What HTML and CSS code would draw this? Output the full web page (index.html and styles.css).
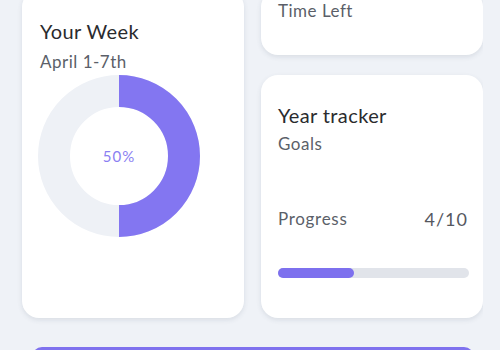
FILE: index.html
```html
<!DOCTYPE html>
<html>
<head>
<meta charset="utf-8">
<link rel="stylesheet" href="styles.css">
</head>
<body>
<div class="page">
  <div class="grid">
    <div class="card week">
      <div class="title">Your Week</div>
      <div class="sub">April 1-7th</div>
      <div class="donut">
        <svg width="162" height="162" viewBox="0 0 162 162">
          <circle cx="81" cy="81" r="65" fill="none" stroke="#eef1f6" stroke-width="32"/>
          <path d="M81 16 A65 65 0 0 1 81 146" fill="none" stroke="#8376f1" stroke-width="32"/>
        </svg>
        <span class="pct">50%</span>
      </div>
    </div>
    <div class="card time">
      <div class="sub">Time Left</div>
    </div>
    <div class="card year">
      <div class="title">Year tracker</div>
      <div class="sub">Goals</div>
      <div class="progress-row">
        <span>Progress</span>
        <span class="count">4/10</span>
      </div>
      <div class="track"><div class="fill" style="width:40%"></div></div>
    </div>
  </div>
  <div class="bottom-bar"></div>
</div>
</body>
</html>
```
FILE: styles.css
```css
html, body {
  margin: 0;
  padding: 0;
  background: #eff2f7;
  font-family: Lato, "Noto Sans", sans-serif;
  overflow: hidden;
}
.page {
  padding-left: 22px;
  width: 461px;
  height: 350px;
  overflow: hidden;
}
.grid {
  margin-top: -10px;
  display: grid;
  grid-template-columns: 222px 222px;
  grid-template-rows: 65px 243px;
  column-gap: 17px;
  row-gap: 20px;
}
.card {
  background: #fff;
  border-radius: 17px;
  box-shadow: 0 2px 5px rgba(60, 70, 100, 0.12);
  box-sizing: border-box;
}
.week {
  grid-row: 1 / 3;
  padding: 29px 18px 0 18px;
}
.title {
  font-size: 20px;
  letter-spacing: 0.4px;
  color: #2a2b2e;
  line-height: 24px;
}
.sub {
  font-size: 17px;
  letter-spacing: 0.5px;
  color: #5b5f69;
  line-height: 20px;
}
.week .sub {
  margin-top: 9px;
}
.donut {
  position: relative;
  width: 162px;
  height: 162px;
  margin-top: 3px;
  margin-left: -2px;
}
.donut svg {
  display: block;
}
.pct {
  position: absolute;
  inset: 0;
  display: flex;
  align-items: center;
  justify-content: center;
  font-size: 15px;
  letter-spacing: 1px;
  color: #8b7ff2;
}
.time {
  padding: 11px 17px 0 17px;
}
.year {
  padding: 28px 14px 0 17px;
}
.year .sub {
  margin-top: 7px;
}
.progress-row {
  display: flex;
  justify-content: space-between;
  margin-top: 55px;
  font-size: 17px;
  letter-spacing: 0.7px;
  color: #5b5f69;
  line-height: 20px;
}
.count {
  font-size: 18px;
  letter-spacing: 1px;
  margin-right: 1px;
  color: #55585f;
}
.track {
  margin-top: 39px;
  height: 10px;
  border-radius: 5px;
  background: #e1e4ea;
}
.fill {
  height: 100%;
  border-radius: 5px;
  background: #7d70ee;
}
.bottom-bar {
  margin-top: 29px;
  margin-left: 10px;
  width: 442px;
  height: 30px;
  border-radius: 10px;
  background: #7f72ee;
}
```
